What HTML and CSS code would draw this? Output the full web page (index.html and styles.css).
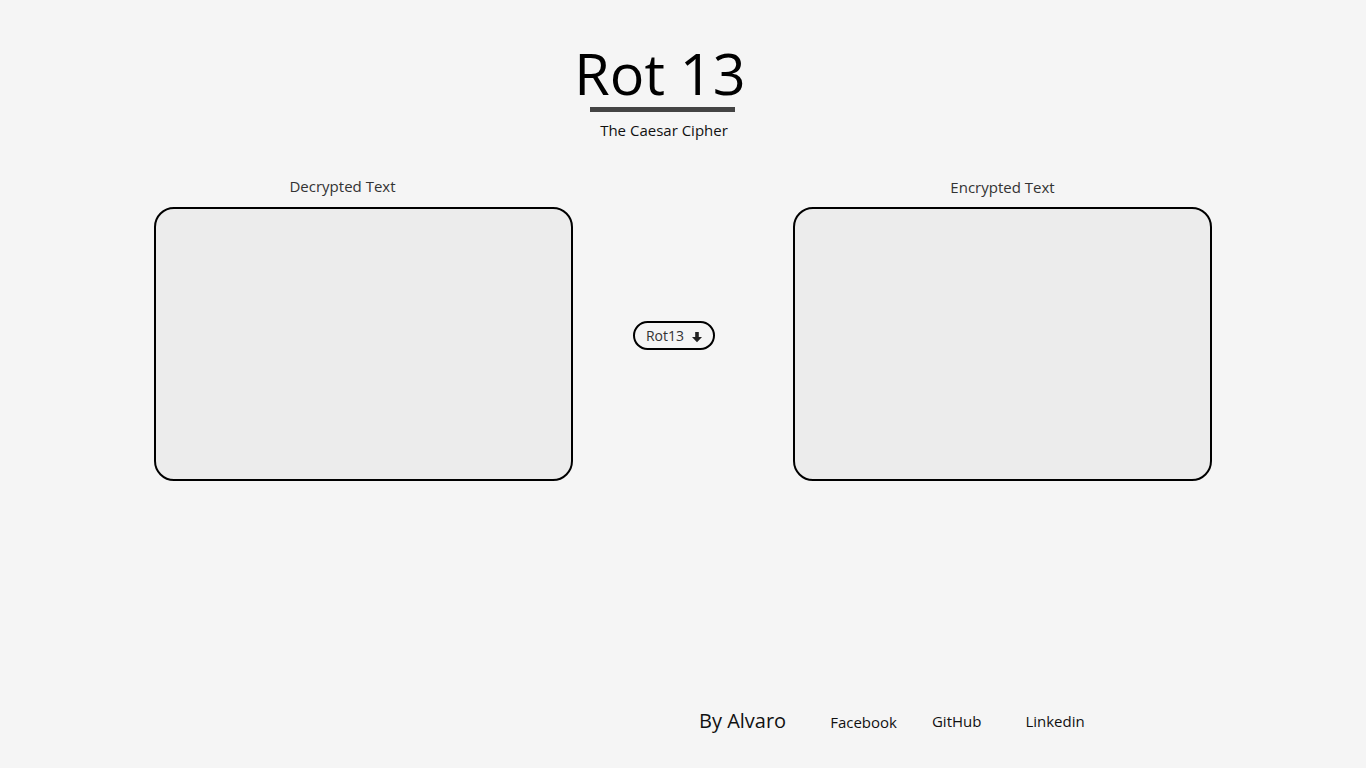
FILE: index.html
```html
<!DOCTYPE html>
<html lang="en">
<head>
<meta charset="utf-8">
<title>Rot 13</title>
<link rel="stylesheet" href="styles.css">
</head>
<body>
<header class="header">
  <h1 class="title">Rot 13</h1>
  <div class="title-bar"></div>
  <p class="subtitle">The Caesar Cipher</p>
</header>
<main class="cipher">
  <section class="panel panel-left">
    <label class="panel-label" for="dec">Decrypted Text</label>
    <textarea id="dec" class="panel-text"></textarea>
  </section>
  <div class="action">
    <button class="rot-btn" type="button">Rot13
      <svg class="rot-icon" viewBox="0 0 12 12" width="12" height="12" aria-hidden="true">
        <path d="M4.2 1h3.6v5h3.2L6 11.2 1 6h3.2z" fill="#222"/>
      </svg>
    </button>
  </div>
  <section class="panel panel-right">
    <label class="panel-label" for="enc">Encrypted Text</label>
    <textarea id="enc" class="panel-text"></textarea>
  </section>
</main>
<footer class="footer">
  <span class="author">By Alvaro</span>
  <a class="link link-fb" href="#">Facebook</a>
  <a class="link link-gh" href="#">GitHub</a>
  <a class="link link-li" href="#">Linkedin</a>
</footer>
</body>
</html>
```
FILE: styles.css
```css
html, body {
  margin: 0;
  padding: 0;
}
body {
  background: #f5f5f5;
  font-family: "Open Sans", "Liberation Sans", sans-serif;
  color: #111;
  height: 768px;
  display: flex;
  flex-direction: column;
}
.header {
  display: flex;
  flex-direction: column;
  align-items: center;
  padding-top: 38px;
  padding-right: 46px;
}
.title {
  margin: 0;
  font-size: 57.5px;
  font-weight: 400;
  line-height: 70px;
  color: #000;
}
.title-bar {
  width: 145px;
  height: 5px;
  background: #444;
  margin-left: 4px;
  margin-top: -1px;
}
.subtitle {
  margin: 8px 0 0 8px;
  font-size: 15px;
  line-height: 20px;
  color: #111;
}
.cipher {
  display: flex;
  justify-content: center;
  margin-top: 36px;
}
.panel {
  display: flex;
  flex-direction: column;
  flex: 0 0 419px;
  width: 419px;
}
.panel-label {
  font-size: 15px;
  line-height: 20px;
  color: #333;
  text-align: center;
  margin-bottom: 11px;
}
.panel-left .panel-label {
  padding-right: 42px;
}
.panel-right .panel-label {
  padding-top: 1px;
  margin-bottom: 10px;
}
.panel-text {
  box-sizing: border-box;
  display: block;
  margin: 0;
  width: 419px;
  height: 274px;
  border: 2px solid #000;
  border-radius: 20px;
  background: #ececec;
  resize: none;
  padding: 10px;
  font-family: inherit;
}
.action {
  flex: 0 0 82px;
  margin: 0 78px 0 60px;
  padding-top: 145px;
}
.rot-btn {
  box-sizing: border-box;
  width: 82px;
  height: 29px;
  border: 2px solid #000;
  border-radius: 15px;
  background: #f5f5f5;
  font-family: inherit;
  font-size: 14px;
  color: #333;
  display: flex;
  align-items: center;
  justify-content: center;
  gap: 7px;
  padding: 0 0 0 1px;
}
.rot-icon {
  margin-top: 3px;
}
.footer {
  margin-top: auto;
  padding: 0 0 33px 699px;
  display: flex;
  align-items: baseline;
}
.author {
  font-size: 20px;
  line-height: 28px;
  color: #111;
}
.link {
  font-size: 15px;
  color: #111;
  text-decoration: none;
}
.link-fb {
  margin-left: 44px;
}
.link-gh {
  margin-left: 35px;
  position: relative;
  top: -1px;
}
.link-li {
  margin-left: 44px;
  position: relative;
  top: -1px;
}
```
